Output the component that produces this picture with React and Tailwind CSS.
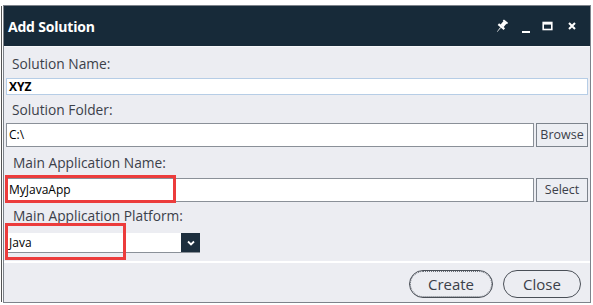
import React from "react";

const font = { fontFamily: '"Open Sans", "Liberation Sans", sans-serif' };

function TitleIcons() {
  return (
    <div className="flex items-center">
      <svg width="13" height="15" viewBox="0 0 13 15" className="mr-[13px] mt-[1px]">
        <g transform="rotate(40 6.5 7.5)" fill="#ffffff">
          <rect x="3.8" y="0.5" width="5.4" height="1.8" />
          <rect x="4.5" y="2" width="4" height="4.8" />
          <polygon points="2.6,6.6 10.4,6.6 10.4,8.8 2.6,8.8" />
          <polygon points="6,8.8 7,8.8 6.7,14.5 6.3,14.5" />
        </g>
      </svg>
      <svg width="10" height="12" viewBox="0 0 10 12" className="mr-[11px] mt-[4px]">
        <rect x="1" y="9" width="8" height="2" fill="#ffffff" />
      </svg>
      <svg width="11" height="10" viewBox="0 0 11 10" className="mr-[15px]">
        <rect x="1.2" y="1.5" width="8.6" height="7" fill="none" stroke="#ffffff" strokeWidth="1.6" />
        <rect x="1" y="1" width="9" height="2.6" fill="#ffffff" />
      </svg>
      <svg width="8" height="8" viewBox="0 0 8 8" className="mr-[14px]">
        <path d="M1 1 L7 7 M7 1 L1 7" stroke="#ffffff" strokeWidth="2" />
      </svg>
    </div>
  );
}

export default function App() {
  return (
    <div className="w-[593px] h-[305px] bg-white relative overflow-hidden" style={font}>
      <div className="absolute left-[1px] top-[6px] w-[1px] h-[296px] bg-[#555]" />
      <div className="pl-[3px] pt-[5px]">
        <div className="w-[588px] h-[298px] border border-[#7d838b] bg-[#ecedf2] flex flex-col">
          <div className="h-[40px] bg-[#172a39] flex items-center justify-between pl-[4px]">
            <span className="text-white font-bold text-[14px] tracking-[-0.2px] mt-[1px]">Add Solution</span>
            <TitleIcons />
          </div>
          <div className="flex-1 flex flex-col px-[2px] pt-[7px] border-t border-[#f7f8fa]">
            <div className="text-[13.75px] leading-[20px] text-[#3b4049] pl-[6px]">Solution Name:</div>
            <div className="mt-[4px] h-[17px] bg-white border border-[#b6cde6] flex items-center pl-[2px]">
              <span className="text-[12px] font-bold text-black">XYZ</span>
            </div>
            <div className="mt-[5px] text-[13.75px] leading-[20px] text-[#3b4049] pl-[6px]">Solution Folder:</div>
            <div className="mt-[3px] flex gap-[2px]">
              <div className="w-[529px] h-[24px] bg-white border border-[#8a9098] flex items-center pl-[2px] text-[12px] text-black">C:\</div>
              <div className="w-[52px] h-[24px] bg-[#eceef3] border border-[#7c838c] flex items-center justify-center text-[12.5px] text-[#3b4049]">Browse</div>
            </div>
            <div className="mt-[6px] text-[13.75px] leading-[20px] text-[#3b4049] pl-[7px]">Main Application Name:</div>
            <div className="mt-[5px] flex gap-[2px]">
              <div className="w-[529px] h-[24px] bg-white border border-[#8a9098] flex items-center pl-[2px] text-[12px] text-black">MyJavaApp</div>
              <div className="w-[52px] h-[24px] bg-[#eceef3] border border-[#7c838c] flex items-center justify-center text-[12.5px] text-[#3b4049]">Select</div>
            </div>
            <div className="mt-[4px] text-[13.75px] leading-[20px] text-[#3b4049] pl-[7px]">Main Application Platform:</div>
            <div className="mt-[7px] ml-[2px] w-[192px] h-[20px] flex border-b border-[#8a9098]">
              <div className="flex-1 bg-white flex items-center pl-[1px] text-[12px] text-black">Java</div>
              <div className="w-[19px] bg-[#1d2f3e] flex items-center justify-center">
                <svg width="10" height="8" viewBox="0 0 10 8">
                  <path d="M2 2.5 L5 5.5 L8 2.5" fill="none" stroke="#ffffff" strokeWidth="1.8" />
                </svg>
              </div>
            </div>
          </div>
          <div className="h-[2px] bg-white" />
          <div className="h-[39px] flex justify-end items-start pt-[7px] pr-[9px] gap-[10px]">
            <div className="w-[84px] h-[28px] rounded-full border border-[#4a4f57] outline-1 outline-dotted outline-[#6b7079] -outline-offset-2 flex items-center justify-center text-[15px] text-[#3b4049]">Create</div>
            <div className="w-[78px] h-[28px] rounded-full border border-[#4a4f57] flex items-center justify-center text-[15px] text-[#3b4049]">Close</div>
          </div>
        </div>
      </div>
      <div className="absolute left-[5px] top-[175px] w-[171px] h-[28px] border-[3px] border-[#ec3c3c]" />
      <div className="absolute left-[5px] top-[223px] w-[121px] h-[37px] border-[3px] border-[#ec3c3c]" />
    </div>
  );
}
